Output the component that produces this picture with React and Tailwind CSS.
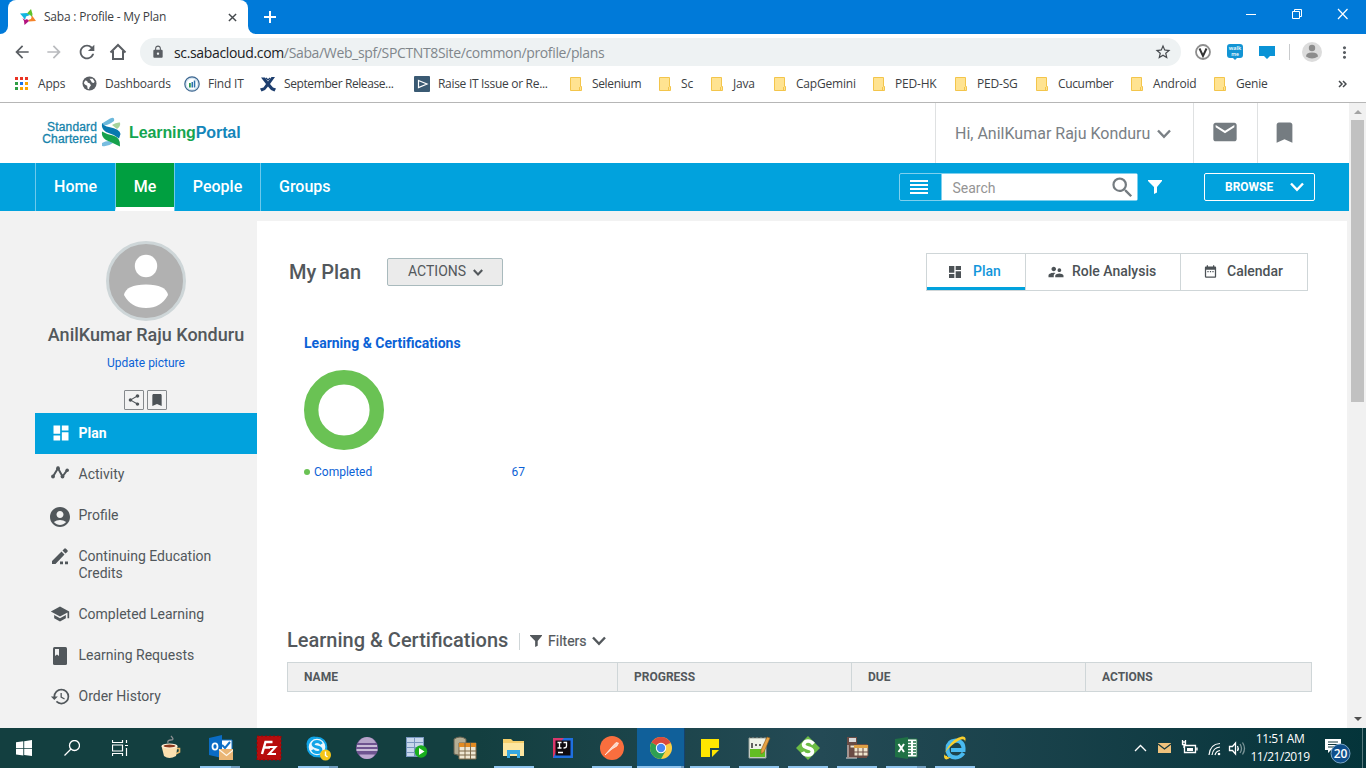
import React from "react";
import {
  MdDashboard, MdAccountCircle, MdSchool, MdHistory, MdShare, MdBookmark,
  MdMail, MdSearch, MdSupervisorAccount, MdLock, MdStarBorder, MdArrowBack,
  MdArrowForward, MdRefresh, MdMoreVert, MdDateRange,
} from "react-icons/md";

function Chevron({ className, w = 2.4 }) {
  return (
    <svg viewBox="0 0 14 10" className={className} fill="none" stroke="currentColor" strokeWidth={w}>
      <path d="M1 1.5 7 7.8 13 1.5" />
    </svg>
  );
}

function Funnel({ className }) {
  return (
    <svg viewBox="0 0 14 14" className={className} fill="currentColor">
      <path d="M0 0h14v1L9 7v5.5L6 14V7L0 1z" />
    </svg>
  );
}

function SabaIcon() {
  return (
    <svg viewBox="0 0 16 16" className="h-4 w-4">
      <path d="M0 4.500 7 4 10 6 6 7.500 5 11 3 8z" fill="#12b5e0" />
      <path d="M11 0 12.500 5 12 8 10 6 7 4.500z" fill="#5fc22c" />
      <path d="M12 6.500 16 12 9 12.500 8 11 11 10z" fill="#f5832a" />
      <path d="M2.500 9 5 11 7 10 9 12 4.500 16 4 12z" fill="#b3127f" />
    </svg>
  );
}

function TabStrip() {
  return (
    <div className="flex h-[34px] shrink-0 bg-[#007ad9]">
      <div className="flex w-2 items-end bg-white">
        <div className="h-full w-2 rounded-br-lg bg-[#007ad9]" />
      </div>
      <div className="bg-[#007ad9]">
        <div className="flex h-[34px] w-[240px] items-center rounded-t-lg bg-white pr-2.5 pl-3">
          <SabaIcon />
          <span className="ml-2 flex-1 text-[12px] tracking-[-0.21px] text-[#3c4043]">Saba : Profile - My Plan</span>
          <svg viewBox="0 0 10 10" className="mr-px h-[9px] w-[9px]" stroke="#45494d" strokeWidth="1.6">
            <path d="M1 1 9 9M9 1 1 9" />
          </svg>
        </div>
      </div>
      <div className="w-2 bg-white">
        <div className="h-full w-2 rounded-bl-lg bg-[#007ad9]" />
      </div>
      <svg viewBox="0 0 12 12" className="mt-[11px] ml-2 h-3 w-3" stroke="#fff" strokeWidth="2">
        <path d="M6 0v12M0 6h12" />
      </svg>
      <div className="flex flex-1 justify-end pr-[18px]">
        <svg viewBox="0 0 102 12" className="mt-[8px] h-3 w-[102px]" fill="none" stroke="#fff">
          <path d="M0 6.5h10M46.500 3.500h7v7h-7zM48.500 3.500v-2h7v7h-2" />
          <path d="M92 1 101.500 11M101.500 1 92 11" strokeWidth="1.200" />
        </svg>
      </div>
    </div>
  );
}

function Toolbar() {
  return (
    <div className="flex h-9 shrink-0 items-center bg-white text-[#5a5e63]">
      <MdArrowBack className="ml-3 h-5 w-5" />
      <MdArrowForward className="ml-3 h-5 w-5 text-[#b9bbbe]" />
      <MdRefresh className="ml-[12px] h-[22px] w-[22px]" />
      <svg viewBox="0 0 18 18" className="ml-[11px] h-[18px] w-[18px]" fill="none" stroke="#5a5e63" strokeWidth="2">
        <path d="M1.500 9.500 9 2 16.500 9.500M4 8v8h10V8" />
      </svg>
      <div className="ml-[13px] flex h-7 w-[1041px] items-center rounded-full bg-[#eef2f3] pr-[9px] pl-[11px]">
        <MdLock className="h-[14px] w-[14px]" />
        <span className="ml-[9px] flex-1 text-[14px] tracking-[-0.35px] text-[#80868b]">
          <span className="text-[#202124]">sc.sabacloud.com</span>/Saba/Web_spf/SPCTNT8Site/common/profile/plans
        </span>
        <MdStarBorder className="h-[18px] w-[18px] text-[#45494d]" />
      </div>
      <svg viewBox="0 0 16 16" className="ml-[14px] h-4 w-4">
        <circle cx="8" cy="8" r="7" fill="#fff" stroke="#8e8e8e" strokeWidth="1.800" />
        <path d="M4.500 4.500 8 12 11.500 4.500" fill="none" stroke="#333" strokeWidth="2" />
      </svg>
      <svg viewBox="0 0 16 16" className="ml-4 h-4 w-4">
        <path d="M3 0h10q3 0 3 3v8q0 3-3 3h-3l-2 2-2-2H3q-3 0-3-3V3q0-3 3-3z" fill="#1294d4" />
        <text x="8" y="6" fontSize="5.500" textAnchor="middle" fill="#fff" fontFamily="Open Sans" fontWeight="600">walk</text>
        <text x="8" y="12" fontSize="5" textAnchor="middle" fill="#fff" fontFamily="Open Sans" fontWeight="600">me</text>
      </svg>
      <svg viewBox="0 0 16 13" className="ml-4 h-[13px] w-4">
        <path d="M0 0h16v10h-5l-3 3-3-3H0z" fill="#0a93d6" />
      </svg>
      <div className="ml-[14px] h-4 w-px bg-[#c9cbcd]" />
      <svg viewBox="0 0 20 20" className="ml-3 h-5 w-5">
        <circle cx="10" cy="10" r="10" fill="#dcdcdc" />
        <circle cx="10" cy="6" r="3.200" fill="#8c8c8c" />
        <path d="M4 14.500q0-4 6-4t6 4q-3 2-6 2t-6-2z" fill="#8c8c8c" />
      </svg>
      <MdMoreVert className="ml-[13px] h-[19px] w-[19px]" />
    </div>
  );
}

function AppsGrid() {
  return (
    <svg viewBox="0 0 13 13" className="h-[13px] w-[13px]">
      <path d="M0 0h3v3H0zM5 0h3v3H5zM10 0h3v3h-3z" fill="#ea3323" />
      <path d="M0 5h3v3H0zM0 10h3v3H0z" fill="#2f9e44" />
      <path d="M5 5h3v3H5z" fill="#1a73e8" />
      <path d="M10 5h3v3h-3zM5 10h3v3H5zM10 10h3v3h-3z" fill="#fba400" />
    </svg>
  );
}

function Globe() {
  return (
    <svg viewBox="0 0 16 16" className="h-[15px] w-[15px]">
      <circle cx="8" cy="8" r="7.500" fill="#5a5e63" />
      <path d="M2 7.500Q2.500 5.500 4 4.500L6 6 6 7 8.500 8 9.500 10 8 12 7.500 14 6 13.500 5.500 10.500 3 9zM8 3 11.500 2.800 13.500 6 12.500 7.500 10.500 7 9.500 5z" fill="#fff" />
    </svg>
  );
}

function FindIt() {
  return (
    <svg viewBox="0 0 16 16" className="-ml-px h-4 w-4">
      <circle cx="8" cy="8" r="7.200" fill="#d5e5f0" stroke="#3c6690" strokeWidth="1.200" />
      <circle cx="8" cy="8" r="5.300" fill="#fff" />
      <path d="M5 7h1.800v4.500H5z" fill="#2d9b51" />
      <path d="M7.500 6H9v5.500H7.500zM9.800 4.500h1.500v7H9.800z" fill="#2b72ad" />
    </svg>
  );
}

function Confluence() {
  return (
    <svg viewBox="0 0 16 16" className="-ml-px h-4 w-4">
      <path d="M1 1.500 5 1.500 8 5.500 11.500 1 15 1 10 8 13 11.500 16 12.500 14.500 15.500 11 14 8 10.500 5 14 1.500 15.500 0 12.500 3.500 11.500 6 8z" fill="#1d3e6e" />
      <path d="M6 2 8 4 10 2" fill="none" stroke="#1d3e6e" strokeWidth="1.200" />
    </svg>
  );
}

function PlayTile() {
  return (
    <svg viewBox="0 0 16 16" className="h-4 w-4">
      <rect width="16" height="16" rx="1" fill="#3a5a73" />
      <path d="M4.500 4.500 13 8 4.500 11.500z" fill="none" stroke="#fff" strokeWidth="1.200" />
    </svg>
  );
}

function Folder() {
  return (
    <svg viewBox="0 0 12 14" className="h-[14px] w-3">
      <path d="M.5.5h10v9h1v4H.5z" fill="#ffe391" stroke="#f3c54b" />
      <path d="M9.500 10v3.500" stroke="#f3c54b" />
    </svg>
  );
}

const bookmarks = [
  { Icon: AppsGrid, box: "w-[67px]", label: "Apps", iw: "w-[23px]" },
  { Icon: Globe, box: "w-[103px]", label: "Dashboards", iw: "w-[23px]" },
  { Icon: FindIt, box: "w-[76px]", label: "Find IT", iw: "w-[23px]" },
  { Icon: Confluence, box: "w-[153px] tracking-[-0.4px]", label: "September Release...", iw: "w-[23px]" },
  { Icon: PlayTile, box: "w-[156px] tracking-[-0.3px]", label: "Raise IT Issue or Re...", iw: "w-[24px]" },
  { Icon: Folder, box: "w-[89px] tracking-[-0.35px]", label: "Selenium", iw: "w-[22px]" },
  { Icon: Folder, box: "w-[52px]", label: "Sc", iw: "w-[22px]" },
  { Icon: Folder, box: "w-[63px]", label: "Java", iw: "w-[22px]" },
  { Icon: Folder, box: "w-[99px]", label: "CapGemini", iw: "w-[22px]" },
  { Icon: Folder, box: "w-[82px]", label: "PED-HK", iw: "w-[22px]" },
  { Icon: Folder, box: "w-[81px]", label: "PED-SG", iw: "w-[22px]" },
  { Icon: Folder, box: "w-[95px] tracking-[-0.35px]", label: "Cucumber", iw: "w-[22px]" },
  { Icon: Folder, box: "w-[83px]", label: "Android", iw: "w-[22px]" },
  { Icon: Folder, box: "w-[60px]", label: "Genie", iw: "w-[22px]" },
];

function Bookmarks() {
  return (
    <div className="flex h-[33px] shrink-0 items-center border-b border-[#b6b6b6] bg-white pb-[5px] pl-[15px] text-[12px] tracking-[-0.2px] text-[#3c4043]">
      {bookmarks.map(({ Icon, box, label, iw }) => (
        <div key={label} className={`flex shrink-0 items-center whitespace-nowrap ${box}`}>
          <span className={`shrink-0 ${iw}`}><Icon /></span>
          {label}
        </div>
      ))}
      <svg viewBox="0 0 9 8" className="ml-[64px] h-2 w-[9px]" fill="none" stroke="#45494d" strokeWidth="1.500">
        <path d="M1 1 4 4 1 7M5 1 8 4 5 7" />
      </svg>
    </div>
  );
}

function Header() {
  return (
    <div className="flex h-[60px] shrink-0 bg-white">
      <div className="flex flex-1 items-start pl-[37px]">
        <div className="mt-[18px] w-[60px] text-right font-['Liberation_Sans'] text-[12px] leading-[12px] tracking-[0.15px] text-[#1583ab] [-webkit-text-stroke:0.3px]">
          Standard<br />Chartered
        </div>
        <svg viewBox="0 0 20 30" className="mt-[14px] ml-1 h-[30px] w-5">
          <path d="M1 6.500Q5 4 9 1.500Q14-1 13 4Q7 9 2 8z" fill="#6db9dc" />
          <path d="M11 8Q15 5 19 5.500Q20 9 16 12z" fill="#a5d39c" />
          <path d="M1 26Q4 24 8 24L12 26Q7 30 1 29z" fill="#78bde0" />
          <path d="M1 6Q3 9 8 10Q19 12 19.500 17L18 21.500Q12 17 5 15Q0 12 1 6z" fill="#0879ae" />
          <path d="M1 14.500Q6 17.500 12 18.500Q20 20.500 19 29.500Q12 26 5 23Q0 20 1 14.500z" fill="#16a14c" />
        </svg>
        <div className="mt-[20px] ml-[8px] font-['Liberation_Sans'] text-[16px] leading-5 font-bold tracking-[-0.1px] text-[#14a550]">
          Learning<span className="text-[#1486ba]">Portal</span>
        </div>
      </div>
      <div className="flex w-[258px] items-center border-l border-[#dfe1e2] pt-px pl-[19px] text-[#7a8085]">
        <span className="text-[16px]">Hi, AnilKumar Raju Konduru</span>
        <Chevron className="mt-px ml-[7px] h-[10px] w-[14px]" />
      </div>
      <div className="flex w-16 items-center justify-center border-l border-[#dfe1e2] pr-px pb-[3px]">
        <MdMail className="h-[28px] w-[28px] text-[#757c81]" />
      </div>
      <div className="flex w-[92px] items-center border-l border-[#dfe1e2] pb-px pl-[13px]">
        <MdBookmark className="h-[27px] w-[27px] text-[#757c81]" />
      </div>
    </div>
  );
}

function Nav() {
  return (
    <div className="flex h-12 shrink-0 bg-[#01a2dd] pl-[35px] text-[16px] font-medium text-white">
      <div className="flex w-20 items-center justify-center border-l border-[#6cc9ec] pb-px">Home</div>
      <div className="flex w-[59px] items-center justify-center border-b-4 border-l border-b-white border-l-[#6cc9ec] bg-[#009f40] pt-[3px]">Me</div>
      <div className="flex w-[86px] items-center justify-center border-l border-[#6cc9ec] pb-px">People</div>
      <div className="flex items-center border-l border-[#6cc9ec] pb-px pl-[18px]">Groups</div>
      <div className="flex flex-1 items-center justify-end pr-[34px]">
        <div className="flex h-7 w-[239px] rounded-[2px] border border-[#7fd0ee]">
          <div className="flex w-[42px] items-center border-r border-[#7fd0ee] pl-[10px]">
            <svg viewBox="0 0 18 14" className="h-[14px] w-[18px]" fill="#fff">
              <path d="M0 0h18v2H0zM0 4h18v2H0zM0 8h18v2H0zM0 12h18v2H0z" />
            </svg>
          </div>
          <div className="flex flex-1 items-center bg-white pr-px pl-[10.500px]">
            <span className="flex-1 pt-0.5 text-[14px] font-normal text-[#949494]">Search</span>
            <MdSearch className="h-[27px] w-[27px] text-[#757c81]" />
          </div>
        </div>
        <Funnel className="ml-2.5 h-[14px] w-[14px]" />
        <div className="ml-[42px] flex h-7 w-[111px] items-center rounded-[2px] border border-white pl-5 text-[12px] font-bold">
          BROWSE
          <Chevron className="ml-[17px] h-[10px] w-[14px]" />
        </div>
      </div>
    </div>
  );
}

function PencilDots() {
  return (
    <svg viewBox="0 0 17 17" className="h-[17px] w-[17px]" fill="currentColor">
      <path d="M0 13 9.500 3.500 12.500 6.500 3.500 16H0zM10.500 2.500 12.500.5Q13.200 0 14 .8L15.500 2.300Q16 3 15.500 3.700L13.500 5.500zM8 13.500h3v2.800H8zM13 13.500h3v2.800h-3z" />
    </svg>
  );
}

function ActivityLine() {
  return (
    <svg viewBox="0 0 18 13" className="mb-1 h-[13px] w-[18px]" fill="currentColor">
      <path d="M2 10.500 7 2.200 11.500 10.500 16.200 4.200" fill="none" stroke="currentColor" strokeWidth="2" />
      <circle cx="2" cy="10.500" r="1.900" /><circle cx="7" cy="2.200" r="1.900" />
      <circle cx="11.500" cy="10.500" r="1.900" /><circle cx="16.200" cy="4.200" r="1.800" />
    </svg>
  );
}

function BookMark() {
  return (
    <svg viewBox="0 0 14 18" className="h-[18px] w-[14px]">
      <rect width="14" height="18" rx="1.500" fill="currentColor" />
      <path d="M2 2h4v7L4 7.500 2 9z" fill="#f2f2f2" />
    </svg>
  );
}

const menu = [
  { label: "Activity", icon: <ActivityLine />, h: "h-[41px]" },
  { label: "Profile", icon: <MdAccountCircle className="mt-0.5 h-6 w-6" />, h: "h-[41px]" },
  { label: "Continuing Education Credits", icon: <PencilDots />, h: "h-[58px]", iconPad: "pb-[17px]" },
  { label: "Completed Learning", icon: <MdSchool className="mb-0.5 h-5 w-5" />, h: "h-[41px]" },
  { label: "Learning Requests", icon: <BookMark />, h: "h-[41px]" },
  { label: "Order History", icon: <MdHistory className="mb-px h-[21px] w-[21px]" />, h: "h-[41px]" },
];

function Sidebar() {
  return (
    <div className="flex w-[222px] shrink-0 flex-col">
      <div className="flex h-[202px] flex-col items-center pt-[30px]">
        <svg viewBox="0 0 80 80" className="h-20 w-20 shrink-0">
          <circle cx="40" cy="40" r="38.500" fill="#b1b1b1" stroke="#ced6d8" strokeWidth="3" />
          <circle cx="40" cy="25" r="11.200" fill="#fff" />
          <path d="M18 54Q20 43.500 40 43.500T62 54Q55 67 40 67T18 54z" fill="#fff" />
        </svg>
        <div className="mt-[3px] text-[18px] leading-[22px] font-medium whitespace-nowrap text-[#53585c]">AnilKumar Raju Konduru</div>
        <div className="mt-[9px] text-[12px] leading-4 text-[#0b62d6]">Update picture</div>
        <div className="mt-[19px] mr-px flex gap-[3px] text-[#4c5256]">
          <div className="flex h-5 w-5 items-center justify-center rounded-[1px] border border-[#85898c]"><MdShare className="h-[14px] w-[14px]" /></div>
          <div className="flex h-5 w-5 items-center justify-center rounded-[1px] border border-[#85898c]"><MdBookmark className="h-4 w-4" /></div>
        </div>
      </div>
      <div className="flex h-[41px] shrink-0 items-center bg-[#01a2dd] text-white">
        <div className="flex w-[43.500px] justify-center pl-[8px]"><MdDashboard className="-mt-0.5 h-5 w-5" /></div>
        <div className="text-[14px] font-bold">Plan</div>
      </div>
      {menu.map((m) => (
        <div key={m.label} className={`flex shrink-0 items-center text-[#51575b] ${m.h}`}>
          <div className={`flex w-[43.500px] shrink-0 justify-center pl-[7px] ${m.iconPad ?? ""}`}>{m.icon}</div>
          <div className="text-[14px] leading-[17px]">{m.label}</div>
        </div>
      ))}
    </div>
  );
}

function Content() {
  return (
    <div className="mt-2.5 mr-0.5 flex flex-1 flex-col bg-white text-[#53585c]">
      <div className="flex h-[102px] items-start pt-8 pr-[39px] pl-8">
        <div className="mt-[7px] w-[98px] text-[20px] leading-6 font-medium">My Plan</div>
        <div className="mt-[5px] flex h-7 w-[116px] items-center rounded-[2px] border border-[#a9babd] bg-[#ebebeb] pb-px pl-5 text-[14px]">
          ACTIONS
          <Chevron className="mt-[2px] ml-[7px] h-[7px] w-[10px]" w={3} />
        </div>
        <div className="flex-1" />
        <div className="flex h-[38px] border border-[#cfd6d8] text-[14px] font-medium text-[#4c5256]">
          <div className="flex w-[98px] items-center border-b-[3px] border-[#01a2dd] pl-5 pt-px text-[#1296db]">
            <MdDashboard className="mt-px h-4 w-4 text-[#4c5256]" /><span className="ml-2.5">Plan</span>
          </div>
          <div className="flex w-[155px] items-center border-l border-[#cfd6d8] pb-px pl-5">
            <MdSupervisorAccount className="ml-px h-[18px] w-[18px]" /><span className="ml-[7px]">Role Analysis</span>
          </div>
          <div className="flex w-[127px] items-center border-l border-[#cfd6d8] pb-px pl-[22px]">
            <MdDateRange className="h-[15px] w-[15px]" /><span className="ml-[9px]">Calendar</span>
          </div>
        </div>
      </div>
      <div className="ml-[47px] flex h-[305px] w-[221px] flex-col pt-[10px] text-[#0b62d6]">
        <div className="text-[14px] leading-5 font-bold">Learning &amp; Certifications</div>
        <svg viewBox="0 0 80 80" className="mt-[17px] h-20 w-20">
          <circle cx="40" cy="40" r="32.800" fill="none" stroke="#6ac254" strokeWidth="14.400" />
        </svg>
        <div className="mt-[14px] flex items-center text-[12px] leading-4">
          <span className="mr-1 h-1.5 w-1.5 rounded-full bg-[#6ac254]" />
          Completed
          <span className="ml-auto">67</span>
        </div>
      </div>
      <div className="flex h-[34px] items-start pl-[30px]">
        <div className="w-[221px] text-[20px] leading-6 font-medium whitespace-nowrap">Learning &amp; Certifications</div>
        <div className="mt-[5px] ml-[11px] h-[17px] w-px bg-[#cfd6d8]" />
        <Funnel className="mt-[7px] ml-2.5 h-3 w-3" />
        <div className="mt-[3px] ml-1.5 text-[14px] leading-5 [-webkit-text-stroke:0.2px]">Filters</div>
        <Chevron className="mt-[8px] ml-[5px] h-[10px] w-[14px]" />
      </div>
      <div className="ml-[30px] flex h-[30px] w-[1025px] shrink-0 border border-[#cfd6d8] bg-[#f0f0f0] text-[12px] leading-7 font-bold">
        <div className="w-[329px] pl-4">NAME</div>
        <div className="w-[234px] border-l border-[#cfd6d8] pl-4">PROGRESS</div>
        <div className="w-[234px] border-l border-[#cfd6d8] pl-4">DUE</div>
        <div className="flex-1 border-l border-[#cfd6d8] pl-4">ACTIONS</div>
      </div>
    </div>
  );
}

const glyphs = {
  windows: <path d="M0 2.300 7.300 1.300V8H0zM8.200 1.200 16 0v8H8.200zM0 8.800h7.300v6.700L0 14.500zM8.200 8.800H16V16l-7.800-1z" fill="#fff" />,
  search: <g fill="none" stroke="#fff" strokeWidth="1.300"><circle cx="10.500" cy="5.500" r="5" /><path d="M7 9 .5 15.500" /></g>,
  task: <path d="M.5 0v2.500h10V0M.5 16v-2.500h10V16M.5 5h10v6H.5zM14.500 0v3M14.500 8v8M13 5.500h3" fill="none" stroke="#fff" strokeWidth="1.200" />,
};

function Glyph({ name }) {
  return (
    <div className="flex w-12 items-center justify-center">
      <svg viewBox="0 0 16 16" className="h-4 w-4">{glyphs[name]}</svg>
    </div>
  );
}

const apps = [
  { key: "coffee", bar: "", art: (
    <g><path d="M9 7Q8 4 12 4T12 0" fill="none" stroke="#8a8f92" strokeWidth="1.300" />
      <path d="M17.500 12.500h3v3.500l-4 2" fill="none" stroke="#e6b765" strokeWidth="1.600" />
      <path d="M2.500 10h16l-1.500 10q-7 4-12 0z" fill="#fbe0b0" /><ellipse cx="10.500" cy="10" rx="8" ry="2.600" fill="#fff1d8" /><ellipse cx="10.500" cy="10" rx="6" ry="1.500" fill="#8c3a1d" /></g>) },
  { key: "outlook", bar: "double", art: (
    <g><path d="M12 4h12v12H12z" fill="#fff" stroke="#1272c8" /><path d="M14 9l3 3 5-6" fill="none" stroke="#1272c8" strokeWidth="2" />
      <path d="M1 2 14-1v23L1 19z" fill="#0a6cc5" /><ellipse cx="7" cy="10.500" rx="2.500" ry="3.200" fill="none" stroke="#fff" strokeWidth="1.800" />
      <path d="M11 13h15v11H11z" fill="#eab676" /><path d="M11 13.500l7.500 6 7.500-6" fill="none" stroke="#fff7ea" strokeWidth="1.200" /></g>) },
  { key: "filezilla", bar: "", art: (
    <g><rect x="0" y="0" width="24" height="24" fill="#b70d0d" stroke="#8d0808" strokeDasharray="2 2" />
      <path d="M5 18 8.500 6h7M7 11.500h6" fill="none" stroke="#fff" strokeWidth="2.400" /><path d="M11.500 11h7l-6.500 7h7" fill="none" stroke="#fff" strokeWidth="2" /></g>) },
  { key: "skype", bar: "double", art: (
    <g><circle cx="8" cy="8" r="7.500" fill="#12a5e8" /><circle cx="14" cy="14" r="7.500" fill="#12a5e8" /><circle cx="11" cy="11" r="9.300" fill="#eaf7fd" stroke="#12a5e8" strokeWidth="2" />
      <path d="M15.500 8Q14 5.500 11 5.500T7 8Q7 10.300 11 11T15 14Q15 16.500 11.200 16.500T6.500 13.800" fill="none" stroke="#12a5e8" strokeWidth="2.800" />
      <circle cx="19.500" cy="19" r="5.500" fill="#f5c518" /><path d="M19.500 15.500V19.500l2 1.500" fill="none" stroke="#fff" strokeWidth="1.400" /></g>) },
  { key: "eclipse", bar: "", art: (
    <g><circle cx="12" cy="12" r="11" fill="#6e5490" /><path d="M3 7Q6 1 12 1T21 7z" fill="#b6a6ca" /><path d="M2 10h20M1.500 14h21" stroke="#e7e0f0" strokeWidth="1.500" /><path d="M4 18.500h16Q17 23 12 23T4 18.500z" fill="#bda9d1" /></g>) },
  { key: "server", bar: "", art: (
    <g><path d="M2 1h18v20H2z" fill="#7896bf" /><path d="M3 2h7v4H3zM11 2h8v4h-8zM3 7h7v4H3zM11 7h8v4h-8zM3 12h7v4H3zM3 17h7v3H3z" fill="#c7d7ec" />
      <circle cx="17" cy="15.500" r="6.200" fill="#19ae1d" /><path d="M15 12 20.500 15.500l-5.500 3.500z" fill="#fff" /></g>) },
  { key: "database", bar: "", art: (
    <g><path d="M1 3q6-4 12 0v15q-6 3-12 0z" fill="#b4ae95" stroke="#635f4e" /><path d="M6 7h17v16H6z" fill="#eee7d3" stroke="#7c6848" /><path d="M6 7h17v4H6z" fill="#e28b22" /><path d="M12 7v16M17.500 7v16M6 15h17M6 19h17" stroke="#7c6848" strokeWidth="1" /></g>) },
  { key: "explorer", bar: "single", art: (
    <g><path d="M1 3h8l2 2h11v15H1z" fill="#f5ce6b" /><path d="M1 7h21v13H1z" fill="#fde6a0" /><path d="M5 14h13v8h-3v-4H8v4H5z" fill="#37a7e0" /></g>) },
  { key: "intellij", bar: "", art: (
    <g><path d="M2 2h20v20H2z" fill="#e2335c" /><path d="M12 2h10v20H2z" fill="#1e6fe0" /><path d="M2 2h11L2 13z" fill="#d9386d" /><path d="M4.500 4.500h15v15h-15z" fill="#100b10" /><path d="M6.500 6.500h4M8.500 6.500v5.500M6.500 12h4M12.500 6.500h3v3.500q0 2-3 2M7 16.500h5" fill="none" stroke="#fff" strokeWidth="1.300" /></g>) },
  { key: "postman", bar: "single", art: (
    <g><circle cx="12" cy="12" r="12" fill="#f96e3e" /><path d="M5 19 11 12 16 6.500 18.500 7 17 10 12 13z" fill="#fbd5c5" stroke="#fff" strokeWidth=".6" /></g>) },
  { key: "chrome", bar: "active", art: (
    <g><circle cx="12" cy="12" r="11" fill="#f9cf43" /><path d="M12 12 2.500 6.500A11 11 0 0 1 21.500 6.500z" fill="#da4a3c" /><path d="M12 12 2.500 6.500A11 11 0 0 0 12 23l4.500-8z" fill="#2fa053" />
      <path d="M12 6.800h9.700" stroke="#da4a3c" /><circle cx="12" cy="12" r="5.200" fill="#fff" /><circle cx="12" cy="12" r="4.200" fill="#4688f1" /></g>) },
  { key: "notes", bar: "single", art: (
    <g><path d="M3 3h18v9h-9v9H3z" fill="#ffe600" /><path d="M14 21v-7h7z" fill="#ffe600" /></g>) },
  { key: "notepad", bar: "single", art: (
    <g><path d="M2 2h17v20H2z" fill="#eef3e8" stroke="#96a19a" /><path d="M3 13h15v8H3z" fill="#62be24" /><path d="M4 2v-1M8 2v-1M12 2v-1M16 2v-1" stroke="#333" /><path d="M5 7v5M8 9h2M12 9h2" stroke="#333" strokeWidth="1.500" /><path d="M14 14 20 1l3 1-6 14-3 2z" fill="#e6a243" stroke="#8c5a1d" strokeWidth=".6" /></g>) },
  { key: "snagit", bar: "single", art: (
    <g><path d="M12 0 24 12 12 24 0 12z" fill="#6cbd45" /><path d="M17.500 8Q15 5 12 5T7.500 8.300Q7.500 11 12 12T16.500 15.700Q16 19 12 19T6.500 16" fill="none" stroke="#fff" strokeWidth="3.600" /></g>) },
  { key: "building", bar: "single", art: (
    <g><path d="M2 1h10v7h10v14H2z" fill="#6b4c45" /><path d="M4 2h7v4H4z" fill="#d9d9d9" /><path d="M5 9h18v11H9V12H5z" fill="#efe6cf" stroke="#6b4c45" /><path d="M9 9h14v3H9z" fill="#dda044" /><path d="M13 12v8M18 12v8M9 16h14" stroke="#6b4c45" /><path d="M3 9v12M1 22h11" stroke="#ddd" /></g>) },
  { key: "excel", bar: "double", art: (
    <g><path d="M12 3h11v18H12z" fill="#fff" stroke="#1f7145" /><path d="M14 6h3M19 6h3M14 9h3M19 9h3M14 12h3M19 12h3M14 15h3M19 15h3M14 18h3M19 18h3" stroke="#1f7145" strokeWidth="1.500" /><path d="M1 3 14 1v22L1 21z" fill="#1f7145" /><path d="M4.500 8 10 16M10 8 4.500 16" stroke="#fff" strokeWidth="2" /></g>) },
  { key: "ie", bar: "single", art: (
    <g><path d="M20.500 17Q17.500 21.500 12.500 21.500 4.500 21 4.500 13T12.500 4.500Q21 5 20.500 14H8" fill="none" stroke="#49baf0" strokeWidth="4" />
      <path d="M2 23Q-1 20 5 11T19 .5Q24 0 22 6Q22 2.500 18 3.500T6 12 4 20Q4 22 8 21Q4 24.500 2 23z" fill="#f9cf2d" /></g>) },
];

const bars = {
  "": <div className="h-0.5" />,
  single: <div className="h-0.5 w-10 bg-[#8fc4ee]" />,
  double: <div className="flex h-0.5 w-10"><div className="w-[31px] bg-[#8fc4ee]" /><div className="flex-1 bg-[#6f9bbd]" /></div>,
  active: <div className="flex h-0.5 w-full"><div className="flex-1 bg-[#8fc4ee]" /><div className="w-[3px] bg-[#6f9bbd]" /></div>,
};

function Taskbar() {
  return (
    <div className="flex h-10 shrink-0 bg-linear-to-r from-[#133f40] from-35% via-[#244a55] via-60% to-[#04343a] font-['Open_Sans'] text-white">
      <Glyph name="windows" />
      <Glyph name="search" />
      <Glyph name="task" />
      <div className="flex pl-0.5">
        {apps.map((a) => (
          <div key={a.key} className={`flex flex-col items-center ${a.bar === "active" ? "ml-px w-12 border-r border-[#16426b] bg-[#10609a]" : "w-[49px]"}`}>
            <div className="flex h-[38px] items-center pt-0.5">
              <svg viewBox="-1 -1 26 26" className="h-[26px] w-[26px]">{a.art}</svg>
            </div>
            {bars[a.bar]}
          </div>
        ))}
      </div>
      <div className="flex flex-1 items-center justify-end pr-[11px]">
        <svg viewBox="0 0 112 18" className="h-[18px] w-[112px]" fill="none" stroke="#fff" strokeWidth="1.300">
          <path d="M1 12 6.500 6.500 12 12" />
          <path d="M24 4h13v10H24z" fill="#f0c27c" stroke="none" /><path d="M24 5 30.500 10 37 5" stroke="#16393d" />
          <path d="M50.500 6.500h11v7h-11zM63 8.500v3" /><path d="M53 9h6v3h-6z" fill="#fff" stroke="none" /><path d="M48 3h4M48.500 1v4.500h3V1M50 5v4" />
          <path d="M75 16Q76 5 86 4.500M78 16Q79 8.500 86 8M81 16Q82 12 86 11.500" strokeWidth="1.200" /><circle cx="85" cy="15" r="1.300" fill="#fff" stroke="none" />
          <path d="M95.500 7.500h3l3-3.500v11l-3-3.500h-3z" /><path d="M103.500 7q1.500 2.500 0 5" /><path d="M106 5q3 4.500 0 9M108.500 3.500q4 6 0 12" stroke="#7c9598" />
        </svg>
        <div className="ml-[3px] w-[62px] text-center text-[12px] leading-[18px] tracking-[-0.45px] whitespace-nowrap">
          11:51 AM<br />11/21/2019
        </div>
        <svg viewBox="0 0 26 26" className="mt-1.5 ml-[14px] h-[26px] w-[26px]">
          <path d="M0 1h16v11H6l-3 3v-3H0z" fill="#fff" />
          <path d="M3 4h10M3 6.500h10M3 9h10" stroke="#12383d" />
          <circle cx="15.500" cy="15.500" r="9.500" fill="#0f4f8c" stroke="#78a4c4" />
          <text x="15.500" y="20" fontFamily="Open Sans" fontSize="12" fontWeight="600" textAnchor="middle" fill="#fff">20</text>
        </svg>
      </div>
      <div className="mr-[3px] w-px bg-[#58797d]" />
    </div>
  );
}

export default function App() {
  return (
    <div className="flex h-[768px] w-[1366px] flex-col overflow-hidden font-['Open_Sans',sans-serif]">
      <TabStrip />
      <Toolbar />
      <Bookmarks />
      <div className="flex h-[625px] shrink-0 font-['Roboto',sans-serif]">
        <div className="flex w-[1349px] flex-col overflow-hidden bg-[#f2f2f2]">
          <Header />
          <Nav />
          <div className="flex flex-1 pl-[35px]">
            <Sidebar />
            <Content />
          </div>
        </div>
        <div className="flex w-[17px] flex-col items-center bg-[#f1f1f1]">
          <svg viewBox="0 0 8 4" className="mt-[7px] h-1 w-2" fill="#a3a3a3"><path d="M0 4 4 0 8 4z" /></svg>
          <div className="mt-[6px] h-[282px] w-[13px] bg-[#c1c1c1]" />
          <svg viewBox="0 0 8 4" className="mt-auto mb-[7px] h-1 w-2" fill="#505050"><path d="M0 0 4 4 8 0z" /></svg>
        </div>
      </div>
      <Taskbar />
    </div>
  );
}
